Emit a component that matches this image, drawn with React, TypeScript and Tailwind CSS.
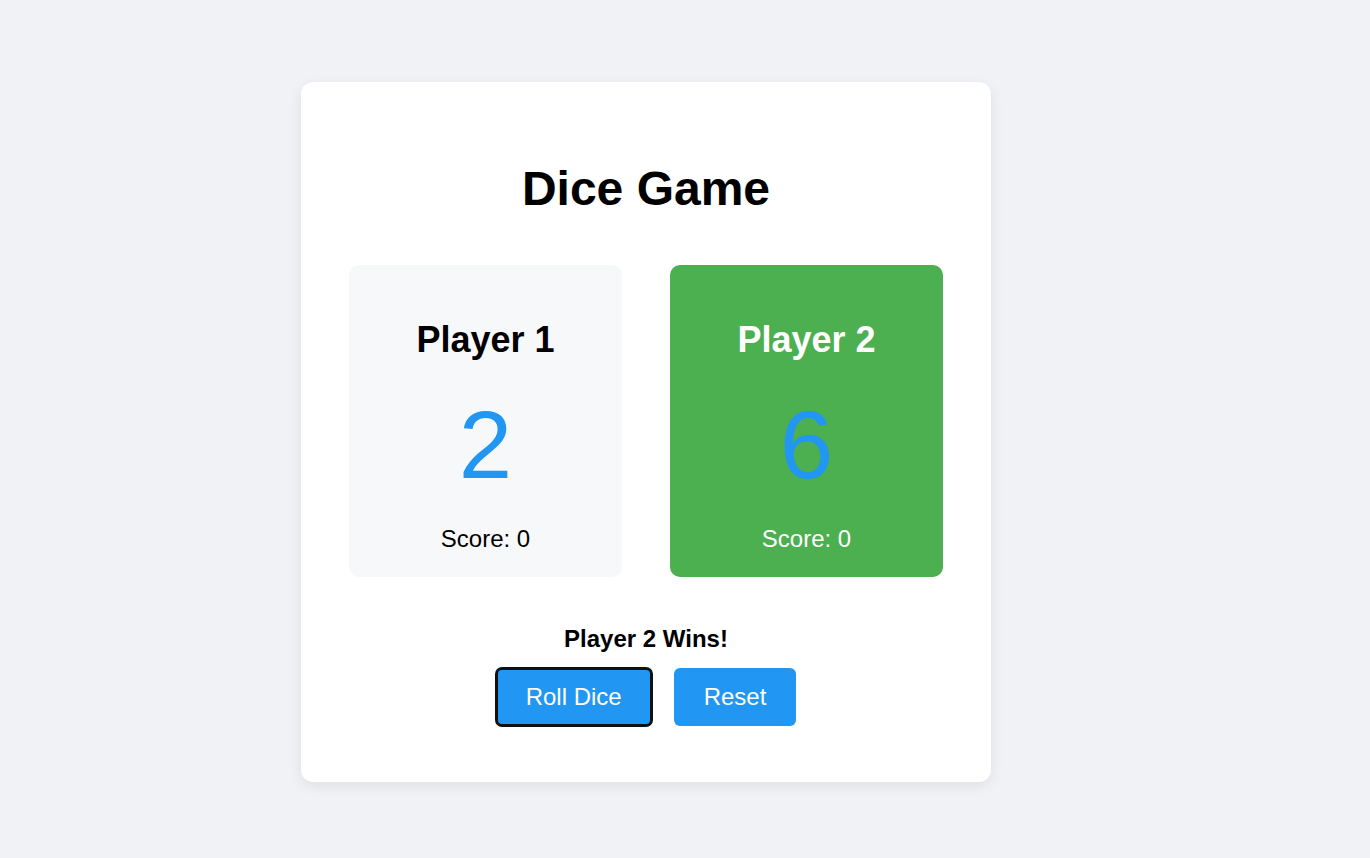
const PlayerCard = ({ name, dice, score, winner }: { name: string; dice: number; score: number; winner?: boolean }) => {
  return (
    <div
      className={`w-[273px] h-[312px] rounded-[10px] flex flex-col items-center pt-6 ${
        winner ? "bg-[#4caf50] text-white" : "bg-[#f7f8fa] text-black"
      }`}
    >
      <h2 className="mt-[30px] text-[36px] leading-[41px] font-bold">{name}</h2>
      <div className="mt-[30px] text-[96px] leading-[110px] text-[#2196f3]">{dice}</div>
      <p className="mt-[25px] text-[24px] leading-[28px]">Score: {score}</p>
    </div>
  );
};

export default function App() {
  return (
    <div className="min-h-screen bg-[#f0f2f5] pt-[82px] pb-[76px] font-['Liberation_Sans',Arial,sans-serif]">
      <div className="ml-[301px] w-[690px] bg-white rounded-xl shadow-[0_4px_14px_rgba(0,0,0,0.08)] px-12 pt-12 pb-[56px] flex flex-col items-center">
        <h1 className="mt-[31px] text-[48px] leading-[55px] font-bold text-black">Dice Game</h1>
        <div className="mt-[49px] flex gap-12">
          <PlayerCard name="Player 1" dice={2} score={0} />
          <PlayerCard name="Player 2" dice={6} score={0} winner />
        </div>
        <p className="mt-[48px] text-[24px] leading-[28px] font-bold text-black">Player 2 Wins!</p>
        <div className="mt-[15px] flex gap-[22px]">
          <button className="px-[30px] h-[58px] text-[24px] text-white bg-[#2196f3] rounded-md outline-[3px] outline-[#101010] -outline-offset-2">
            Roll Dice
          </button>
          <button className="px-[30px] h-[58px] text-[24px] text-white bg-[#2196f3] rounded-md">
            Reset
          </button>
        </div>
      </div>
    </div>
  );
}
